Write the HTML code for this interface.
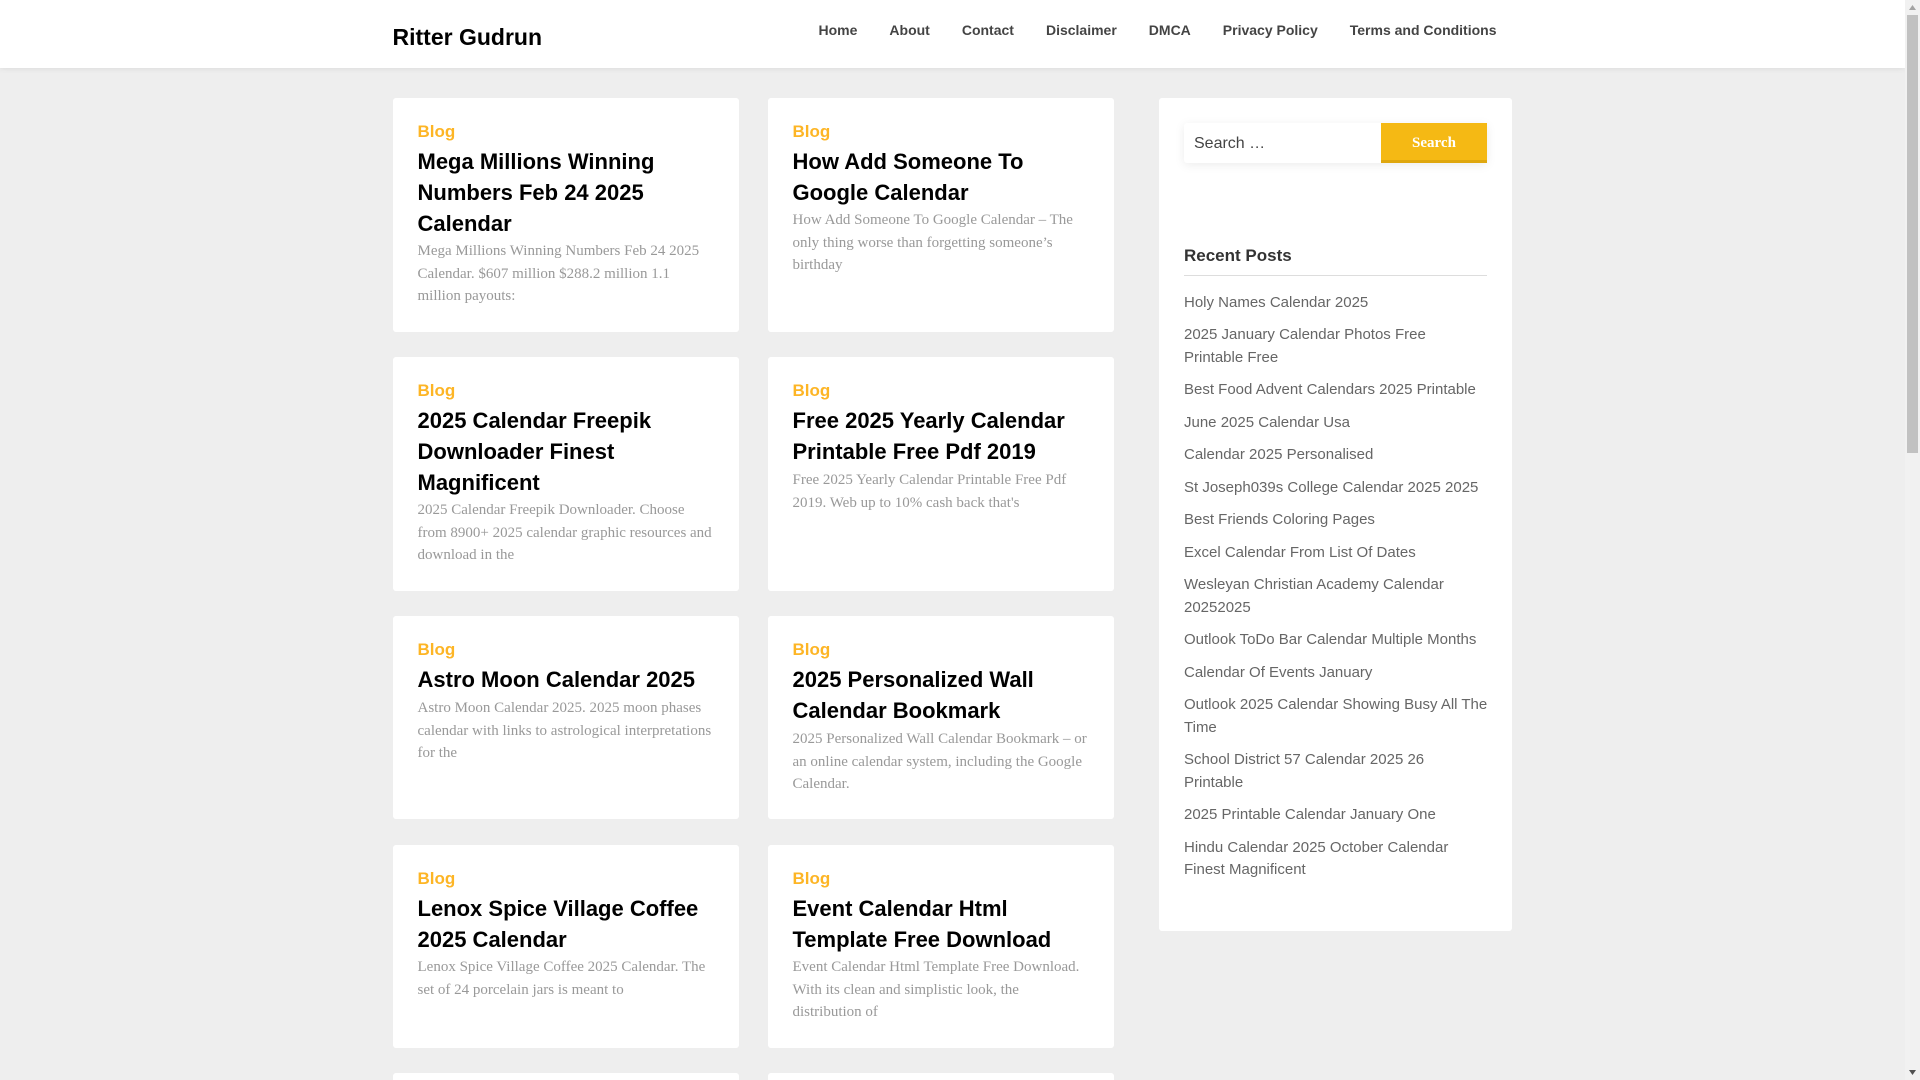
<!DOCTYPE html>
<html><head><meta charset="utf-8"><title>Ritter Gudrun</title>
<style>
*{box-sizing:border-box}
html,body{margin:0;padding:0;width:1920px;height:1080px;overflow:hidden;background:#eee;font-family:"Liberation Sans",sans-serif}
a{text-decoration:none;color:inherit}
#wrap{position:absolute;left:0;top:0;width:1920px;height:1080px;overflow:hidden}
#hdr{position:absolute;left:0;top:0;width:1905px;height:68px;background:#fff;box-shadow:0 0 6px rgba(0,0,0,.1)}
#logo{position:absolute;left:392.5px;top:22px;font-size:23px;line-height:30px;font-weight:700;color:#000}
#nav{position:absolute;right:408.5px;top:20px;display:flex;gap:32px;font-size:14px;line-height:21px;font-weight:700;color:#444}
.c{position:absolute;width:346px;background:#fff;border-radius:3px;padding:25px 20px 25px 24.5px;overflow:hidden}
.l{left:393px}.r{left:768px}
.cat{font-size:17px;line-height:17px;height:24px;color:#fdb525;font-weight:700;display:block}
.c h2{margin:0 0 .7px;font-size:22px;line-height:30.8px;font-weight:700;color:#000}
.c.d h2{margin-bottom:1.5px}
.c p{margin:0;font-family:"Liberation Serif",serif;font-size:15px;line-height:22.5px;color:#999}
#side{position:absolute;left:1159px;top:98px;width:353px;height:833px;background:#fff;border-radius:3px}
#inp{position:absolute;left:25px;top:25px;width:303px;height:40px;background:#fff;border-radius:3px;box-shadow:0 2px 10px rgba(0,0,0,.08);font-size:16px;line-height:42px;padding-left:10px;color:#444}
#btn{position:absolute;left:222px;top:25px;width:106px;height:40px;background:#f5b914;border-bottom:3px solid #dfa70e;font-family:"Liberation Serif",serif;font-weight:700;font-size:15px;line-height:40px;text-align:center;color:#fff}
#side h3{position:absolute;left:25px;top:146px;width:303px;margin:0;height:31px;font-size:17px;line-height:24px;color:#333;border-bottom:1px solid #ddd;font-weight:700;box-sizing:content-box}
#side ul{position:absolute;left:25px;top:193.5px;width:305px;margin:0;padding:0;list-style:none;font-size:15px;line-height:22.5px;color:#666}
#side li{margin-bottom:10px}
#sb{position:absolute;left:1905px;top:0;width:15px;height:1080px;background:#f1f1f1}
#th{position:absolute;left:2px;top:15px;width:11px;height:438px;background:#c1c1c1}
</style></head><body><div id="wrap">
<div id="hdr"><a id="logo" href="#">Ritter Gudrun</a>
<div id="nav"><a href="#">Home</a><a href="#">About</a><a href="#">Contact</a><a href="#">Disclaimer</a><a href="#">DMCA</a><a href="#">Privacy Policy</a><a href="#">Terms and Conditions</a></div></div>

<div class="c l" style="top:98px;height:234px"><a class="cat" href="#">Blog</a><h2>Mega Millions Winning<br>Numbers Feb 24 2025<br>Calendar</h2><p>Mega Millions Winning Numbers Feb 24 2025<br>Calendar. $607 million $288.2 million 1.1<br>million payouts:</p></div>
<div class="c r" style="top:98px;height:234px"><a class="cat" href="#">Blog</a><h2>How Add Someone To<br>Google Calendar</h2><p>How Add Someone To Google Calendar – The<br>only thing worse than forgetting someone’s<br>birthday</p></div>
<div class="c l" style="top:357px;height:234px"><a class="cat" href="#">Blog</a><h2>2025 Calendar Freepik<br>Downloader Finest<br>Magnificent</h2><p>2025 Calendar Freepik Downloader. Choose<br>from 8900+ 2025 calendar graphic resources and<br>download in the</p></div>
<div class="c r d" style="top:357px;height:234px"><a class="cat" href="#">Blog</a><h2>Free 2025 Yearly Calendar<br>Printable Free Pdf 2019</h2><p>Free 2025 Yearly Calendar Printable Free Pdf<br>2019. Web up to 10% cash back that's</p></div>
<div class="c l d" style="top:616px;height:203px"><a class="cat" href="#">Blog</a><h2>Astro Moon Calendar 2025</h2><p>Astro Moon Calendar 2025. 2025 moon phases<br>calendar with links to astrological interpretations<br>for the</p></div>
<div class="c r d" style="top:616px;height:203px"><a class="cat" href="#">Blog</a><h2>2025 Personalized Wall<br>Calendar Bookmark</h2><p>2025 Personalized Wall Calendar Bookmark – or<br>an online calendar system, including the Google<br>Calendar.</p></div>
<div class="c l" style="top:845px;height:203px"><a class="cat" href="#">Blog</a><h2>Lenox Spice Village Coffee<br>2025 Calendar</h2><p>Lenox Spice Village Coffee 2025 Calendar. The<br>set of 24 porcelain jars is meant to</p></div>
<div class="c r" style="top:845px;height:203px"><a class="cat" href="#">Blog</a><h2>Event Calendar Html<br>Template Free Download</h2><p>Event Calendar Html Template Free Download.<br>With its clean and simplistic look, the<br>distribution of</p></div>
<div class="c l" style="top:1073px;height:7px;padding:0;border-radius:3px 3px 0 0"></div>
<div class="c r" style="top:1073px;height:7px;padding:0;border-radius:3px 3px 0 0"></div>

<div id="side">
<div id="inp">Search …</div><div id="btn">Search</div>
<h3>Recent Posts</h3>
<ul>
<li>Holy Names Calendar 2025</li>
<li>2025 January Calendar Photos Free<br>Printable Free</li>
<li>Best Food Advent Calendars 2025 Printable</li>
<li>June 2025 Calendar Usa</li>
<li>Calendar 2025 Personalised</li>
<li>St Joseph039s College Calendar 2025 2025</li>
<li>Best Friends Coloring Pages</li>
<li>Excel Calendar From List Of Dates</li>
<li>Wesleyan Christian Academy Calendar<br>20252025</li>
<li>Outlook ToDo Bar Calendar Multiple Months</li>
<li>Calendar Of Events January</li>
<li>Outlook 2025 Calendar Showing Busy All The<br>Time</li>
<li>School District 57 Calendar 2025 26<br>Printable</li>
<li>2025 Printable Calendar January One</li>
<li>Hindu Calendar 2025 October Calendar<br>Finest Magnificent</li>
</ul></div>

<div id="sb"><div id="th"></div>
<svg style="position:absolute;left:0;top:0" width="15" height="15"><path d="M7.5 5L11 10H4z" fill="#a3a3a3"/></svg>
<svg style="position:absolute;left:0;top:1065px" width="15" height="15"><path d="M7.5 10L11 5H4z" fill="#505050"/></svg>
</div>
</div></body></html>
